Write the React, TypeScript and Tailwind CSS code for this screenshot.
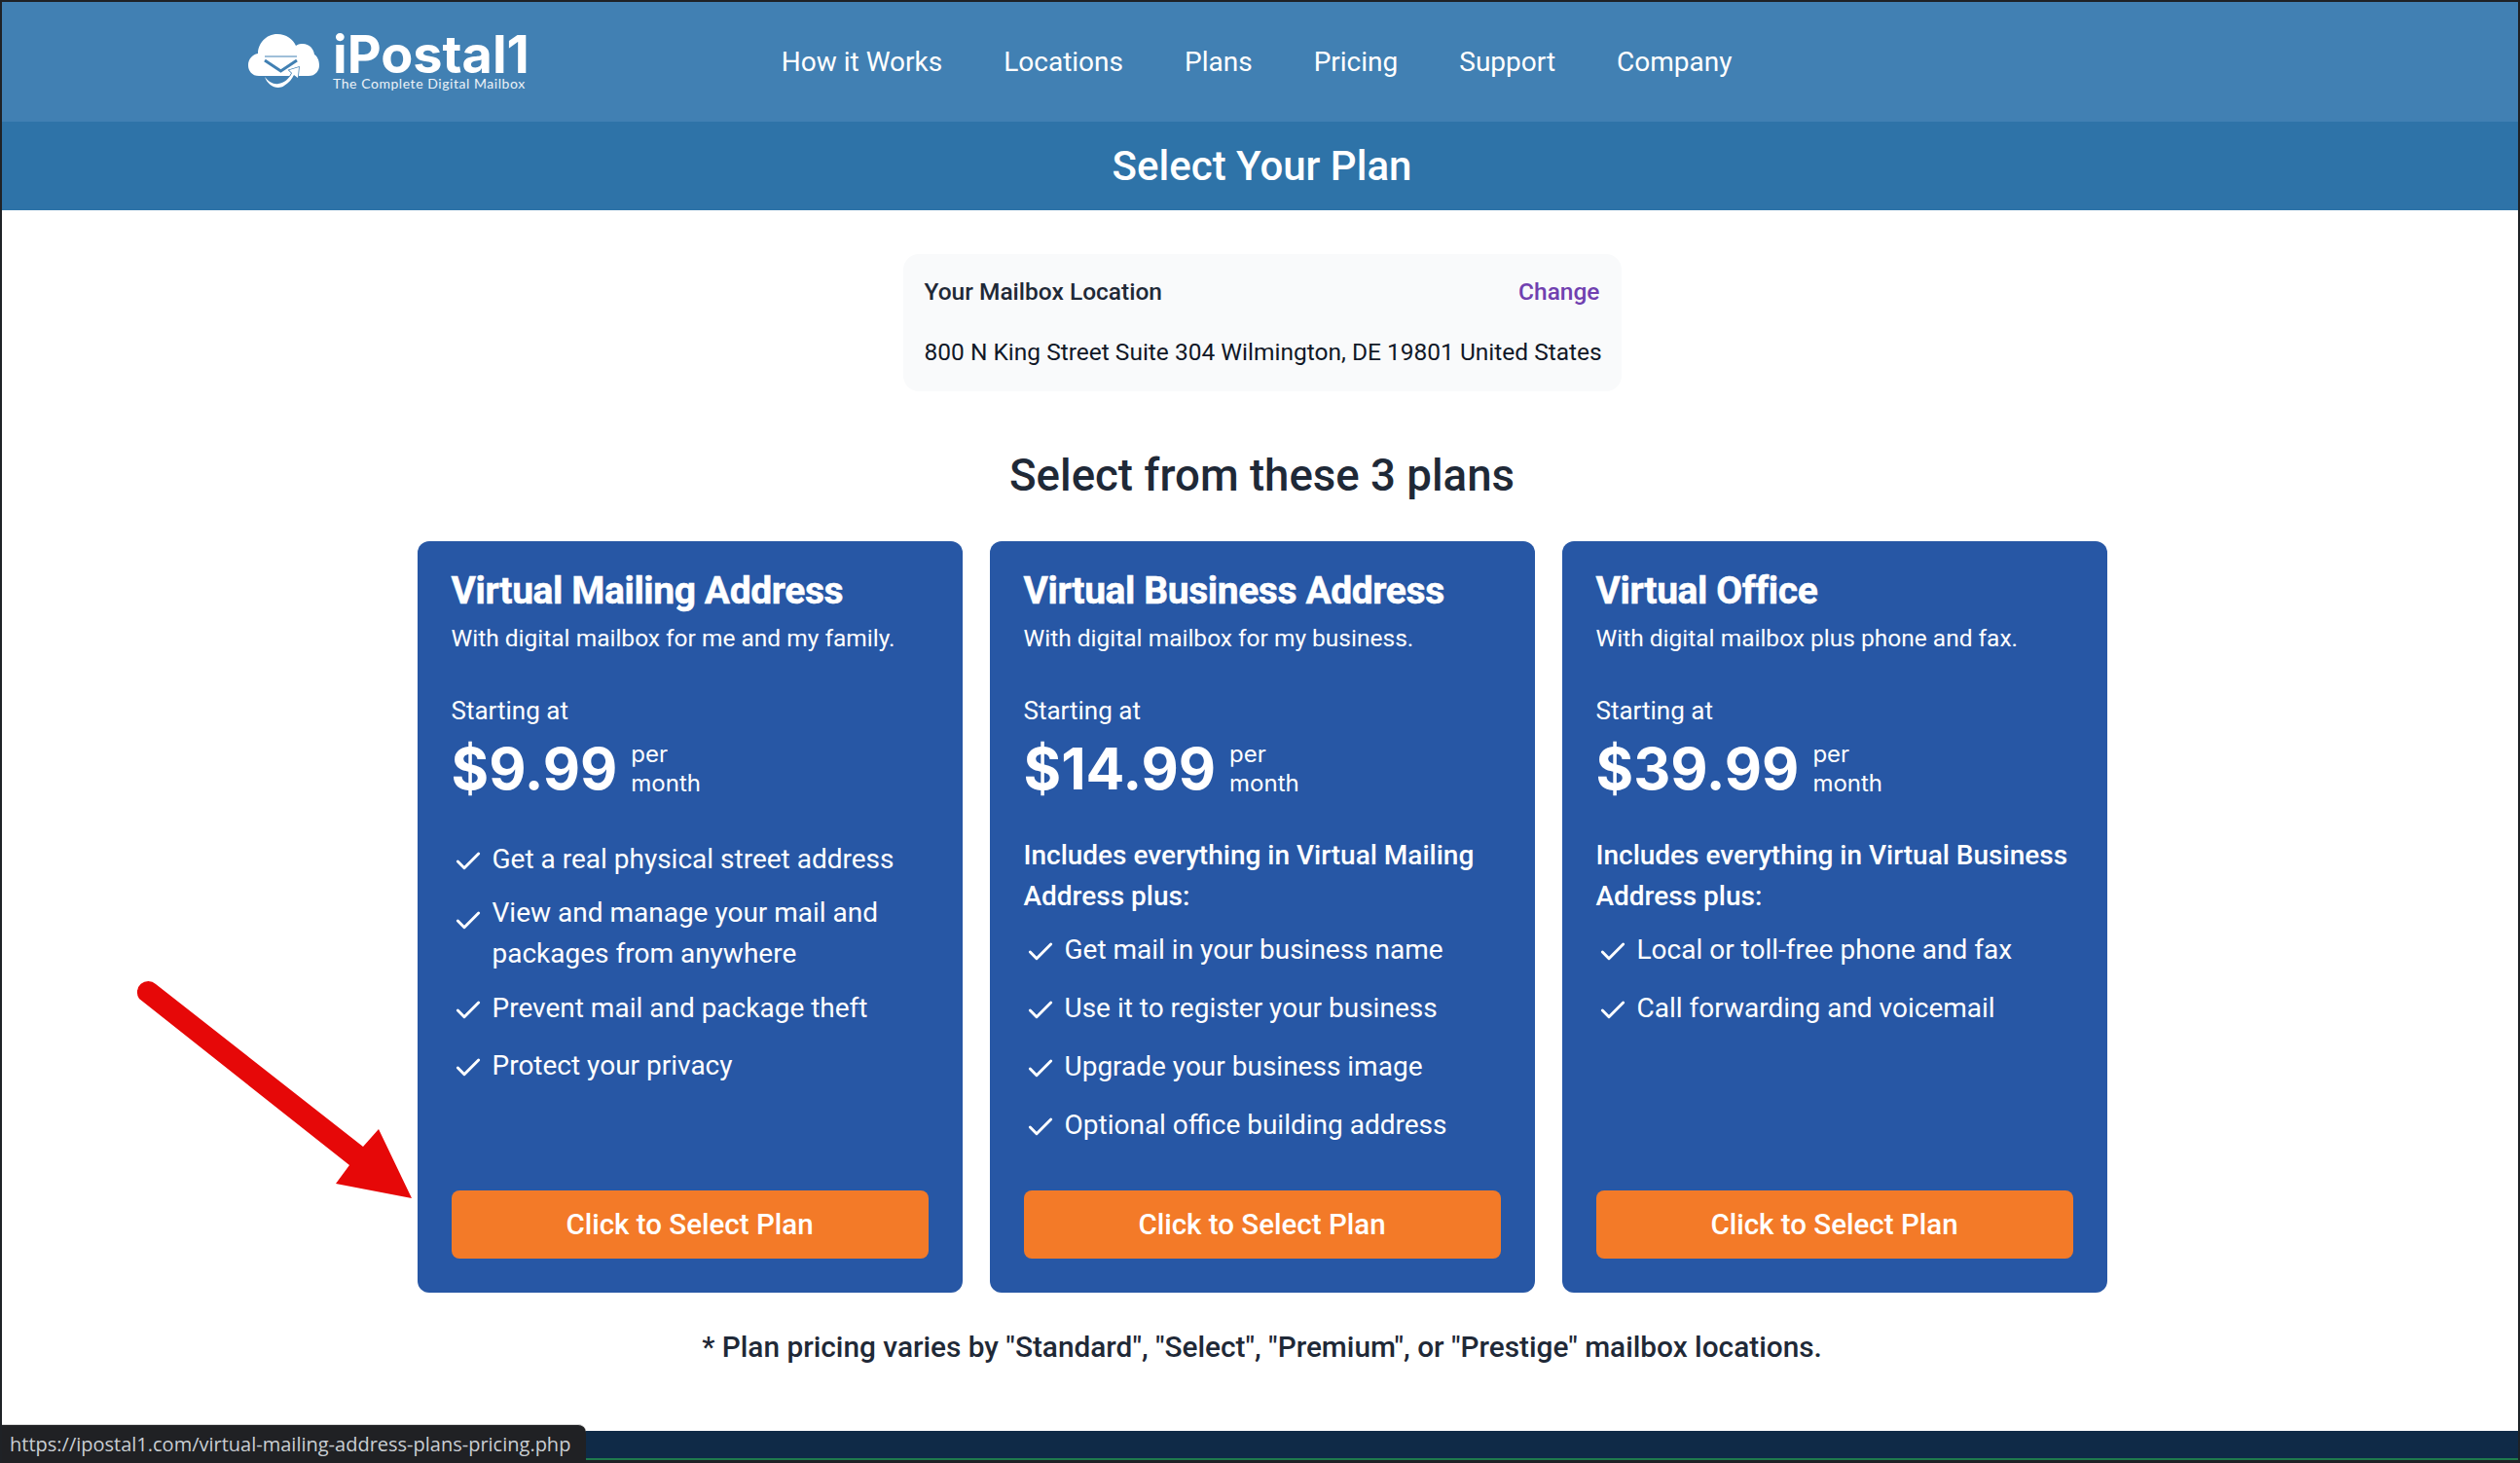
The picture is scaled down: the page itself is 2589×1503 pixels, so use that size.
import { Check } from 'lucide-react'

const navLinks = ['How it Works', 'Locations', 'Plans', 'Pricing', 'Support', 'Company']

type Feature = { text: string; className: string; checkClass?: string }

type Plan = {
  title: string
  subtitle: string
  price: string
  includes?: string
  features: Feature[]
}

const plans: Plan[] = [
  {
    title: 'Virtual Mailing Address',
    subtitle: 'With digital mailbox for me and my family.',
    price: '$9.99',
    features: [
      { text: 'Get a real physical street address', className: 'mb-[13px]' },
      { text: 'View and manage your mail and packages from anywhere', className: 'mb-[14px]', checkClass: 'mt-[13px]' },
      { text: 'Prevent mail and package theft', className: 'mb-[17px]' },
      { text: 'Protect your privacy', className: '' },
    ],
  },
  {
    title: 'Virtual Business Address',
    subtitle: 'With digital mailbox for my business.',
    price: '$14.99',
    includes: 'Includes everything in Virtual Mailing Address plus:',
    features: [
      { text: 'Get mail in your business name', className: 'mb-[18px]' },
      { text: 'Use it to register your business', className: 'mb-[18px]' },
      { text: 'Upgrade your business image', className: 'mb-[18px]' },
      { text: 'Optional office building address', className: '' },
    ],
  },
  {
    title: 'Virtual Office',
    subtitle: 'With digital mailbox plus phone and fax.',
    price: '$39.99',
    includes: 'Includes everything in Virtual Business Address plus:',
    features: [
      { text: 'Local or toll-free phone and fax', className: 'mb-[18px]' },
      { text: 'Call forwarding and voicemail', className: '' },
    ],
  },
]

function Logo() {
  return (
    <div className="flex items-start gap-[13px]">
      <svg width="74" height="58" viewBox="0 0 74 58" className="shrink-0">
        <path
          d="M11 43C4 43 0 38 0 32 0 26 4 21 10 20 10 10 18 0 30 0 39 0 46 5 49 12 52 10 54 10 56 10 63 10 67 15 68 21 71 23 73 27 73 32 73 38 69 43 62 43Z"
          fill="#fff"
        />
        <path d="M17 23H50" stroke="#4180b3" strokeWidth="1" />
        <path d="M17 27 33.5 38 50 27" fill="none" stroke="#4180b3" strokeWidth="3" />
        <path
          d="M17 44C20 53 30 58 37 53 42 50 45 46 47 42L51 45 52 34 42 37 45 40C42 46 37 50 31 51 26 52 21 49 17 44Z"
          fill="#fff"
          stroke="#4180b3"
          strokeWidth="1.5"
          paintOrder="stroke"
        />
      </svg>
      <div className="flex flex-col">
        <span className="font-['Inter',sans-serif] text-[54px] leading-[42px] font-bold text-white">iPostal1</span>
        <span className="mt-[2px] font-['Lato',sans-serif] text-[14px] leading-[14px] tracking-[0.55px] text-white/90">
          The Complete Digital Mailbox
        </span>
      </div>
    </div>
  )
}

function PlanCard({ plan }: { plan: Plan }) {
  return (
    <div className="flex h-[772px] w-[560px] flex-col rounded-[12px] bg-[#2757a5] px-[35px] pb-[35px] text-white">
      <h3 className="mt-[29px] text-[39px] leading-[44px] font-bold tracking-[-0.4px] [-webkit-text-stroke:0.5px_white]">
        {plan.title}
      </h3>
      <p className="mt-[9px] text-[24.5px] leading-[36px]">{plan.subtitle}</p>

      <p className="mt-[38px] text-[26px] leading-[36px]">Starting at</p>
      <div className="mt-[5px] mb-[2px] flex items-center font-['Inter',sans-serif]">
        <span className="text-[59px] leading-[74px] font-bold">{plan.price}</span>
        <span className="ml-[14px] w-[90px] text-[24px] leading-[30px]">per month</span>
      </div>

      {plan.includes ? (
        <p className="mt-[29px] mb-[13px] text-[28px] leading-[42px] font-medium">{plan.includes}</p>
      ) : null}

      <ul className={plan.includes ? 'flex flex-col' : 'mt-[33px] flex flex-col'}>
        {plan.features.map((f) => (
          <li key={f.text} className={`flex items-start text-[28px] leading-[42px] ${f.className}`}>
            <Check
              className={`mr-[9px] ml-[1px] h-[32px] w-[32px] shrink-0 ${f.checkClass ?? 'mt-[7px]'}`}
              strokeWidth={2.2}
            />
            <span>{f.text}</span>
          </li>
        ))}
      </ul>

      <button className="mt-auto h-[70px] w-[490px] rounded-[8px] bg-[#f37a28] text-[29.5px] font-medium text-white">
        Click to Select Plan
      </button>
    </div>
  )
}

export default function App() {
  return (
    <div className="relative flex h-[1503px] w-full flex-col overflow-hidden border-x-2 border-t-2 border-[#1f2226] bg-white font-['Roboto',sans-serif]">
      {/* HEADER */}
      <header className="flex h-[123px] shrink-0 items-center bg-[#4180b3] pl-[253px]">
        <Logo />
        <nav className="ml-[259px] flex gap-[63px]">
          {navLinks.map((link) => (
            <a key={link} className="text-[28px] leading-[36px] text-white">
              {link}
            </a>
          ))}
        </nav>
      </header>

      <div className="flex h-[91px] shrink-0 items-center justify-center bg-[#2e73a8] pl-[4px]">
        <h1 className="text-[42px] font-medium text-white">Select Your Plan</h1>
      </div>

      {/* MAIN */}
      <main className="flex flex-1 flex-col items-center pl-[4px]">
        <div className="mt-[45px] h-[141px] w-[738px] rounded-[16px] bg-[#f9fafb] px-[22px] pt-[21px]">
          <div className="flex items-center justify-between text-[24.5px] leading-[36px] font-medium">
            <span className="text-[#1f2937]">Your Mailbox Location</span>
            <span className="text-[#7040b0]">Change</span>
          </div>
          <p className="mt-[26px] text-[24.5px] leading-[36px] whitespace-nowrap text-[#111827]">
            800 N King Street Suite 304 Wilmington, DE 19801 United States
          </p>
        </div>

        <h2 className="mt-[57px] text-[45.6px] leading-[60px] font-medium text-[#1f2937]">
          Select from these 3 plans
        </h2>

        <div className="mt-[37px] flex gap-[28px]">
          {plans.map((plan) => (
            <PlanCard key={plan.title} plan={plan} />
          ))}
        </div>

        <p className="mt-[36px] text-[29.8px] leading-[40px] font-medium text-[#1f2937]">
          * Plan pricing varies by "Standard", "Select", "Premium", or "Prestige" mailbox locations.
        </p>
      </main>

      {/* FOOTER */}
      <footer className="h-[33px] shrink-0 border-b-[3px] border-[#1f2226] bg-[#0f2a47]">
        <div className="mt-[28px] h-[2px] bg-[#1f7a4d]" />
      </footer>

      {/* arrow annotation */}
      <svg className="pointer-events-none absolute top-[1002px] left-[134px]" width="292" height="232" viewBox="134 1002 292 232">
        <path
          d="M158 1009 371 1176 387 1158 421 1229 343 1214 357 1195 141 1024A11.4 11.4 0 0 1 158 1009Z"
          fill="#e60808"
        />
      </svg>

      {/* status bubble */}
      <div className="absolute bottom-0 left-0 flex h-[40px] w-[600px] items-center rounded-tr-[8px] border-t border-[#d8d8d8] bg-[#202124] pl-[8px] font-['Open_Sans',sans-serif] text-[20px] whitespace-nowrap text-[#c9ced3]">
        https://ipostal1.com/virtual-mailing-address-plans-pricing.php
      </div>
    </div>
  )
}
